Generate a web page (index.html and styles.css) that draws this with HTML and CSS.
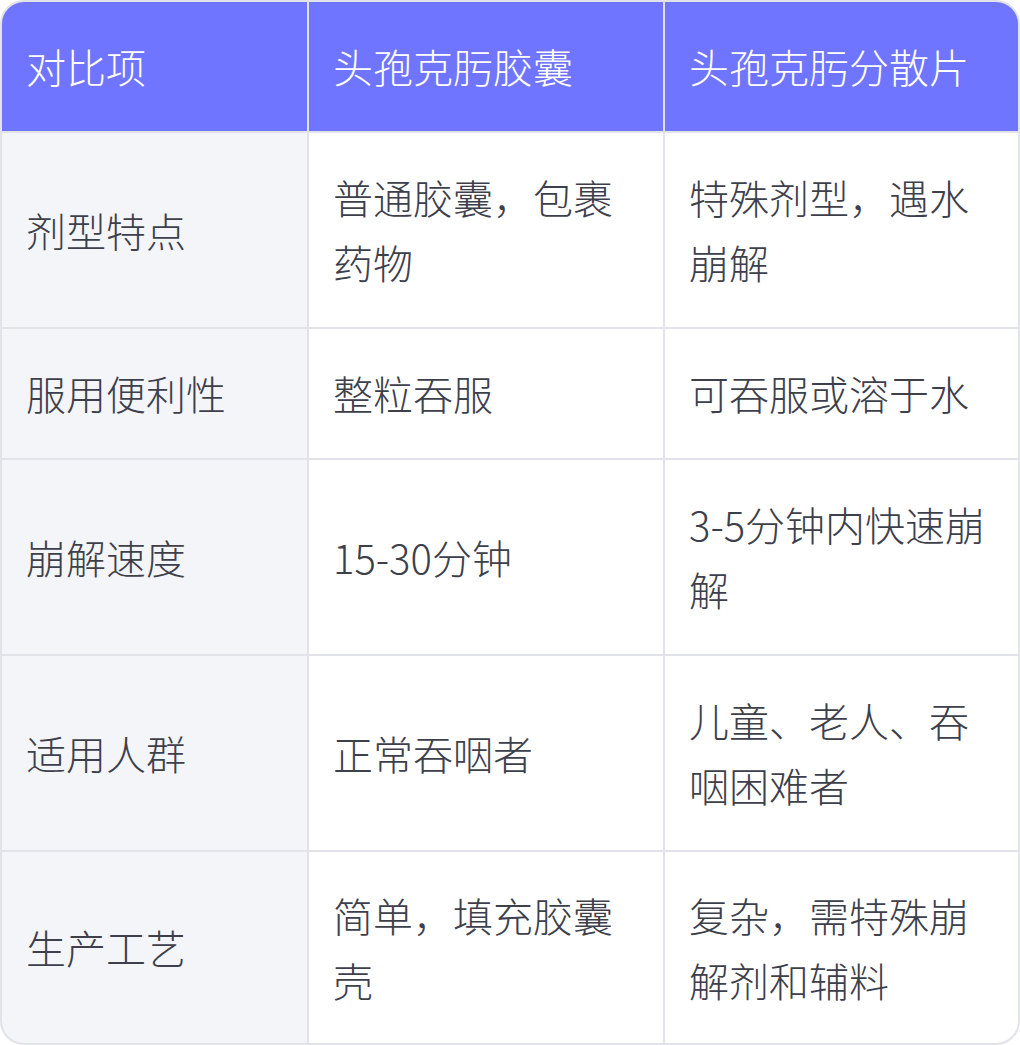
FILE: index.html
```html
<!DOCTYPE html>
<html lang="zh-CN">
<head>
<meta charset="utf-8">
<link rel="stylesheet" href="styles.css">
</head>
<body>
<div class="table">
  <div class="cell head">对比项</div>
  <div class="cell head">头孢克肟胶囊</div>
  <div class="cell head">头孢克肟分散片</div>

  <div class="cell label">剂型特点</div>
  <div class="cell">普通胶囊，包裹药物</div>
  <div class="cell">特殊剂型，遇水崩解</div>

  <div class="cell label">服用便利性</div>
  <div class="cell">整粒吞服</div>
  <div class="cell">可吞服或溶于水</div>

  <div class="cell label">崩解速度</div>
  <div class="cell">15-30分钟</div>
  <div class="cell">3-5分钟内快速崩解</div>

  <div class="cell label">适用人群</div>
  <div class="cell">正常吞咽者</div>
  <div class="cell">儿童、老人、吞咽困难者</div>

  <div class="cell label">生产工艺</div>
  <div class="cell">简单，填充胶囊壳</div>
  <div class="cell">复杂，需特殊崩解剂和辅料</div>
</div>
</body>
</html>
```

FILE: styles.css
```css
html, body {
  margin: 0;
  padding: 0;
  background: #ffffff;
}

.table {
  box-sizing: border-box;
  width: 1020px;
  height: 1045px;
  display: grid;
  grid-template-columns: 305px 354px 353px;
  grid-template-rows: 129px 194px 129px 194px 194px 1fr;
  gap: 2px;
  background: #e2e3e8;
  border: 2px solid #e2e3e8;
  border-radius: 24px;
  overflow: hidden;
  font-family: "Noto Sans CJK SC", "Noto Sans", sans-serif;
  font-size: 40px;
  font-weight: 300;
  line-height: 64.7px;
  color: #3d404b;
}

.cell {
  background: #ffffff;
  padding: 0 24px;
  display: flex;
  align-items: center;
}

.head {
  background: #7075ff;
  color: #ffffff;
}

.label {
  background: #f4f5f9;
}
```
